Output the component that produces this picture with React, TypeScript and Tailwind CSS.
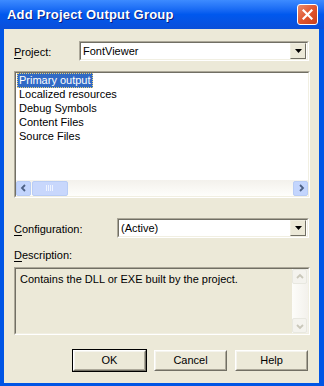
const font = { fontFamily: '"Liberation Sans", Arial, sans-serif' }

function Sunken({ className, children }: { className: string; children?: React.ReactNode }) {
  return (
    <div className={`border border-t-[#ACA899] border-l-[#ACA899] border-b-white border-r-white ${className}`}>
      <div className="flex h-full w-full flex-col border border-t-[#716F64] border-l-[#716F64] border-b-[#F1EFE2] border-r-[#F1EFE2]">
        {children}
      </div>
    </div>
  )
}

function Combo({ value, className }: { value: string; className: string }) {
  return (
    <Sunken className={`h-[20px] bg-white ${className}`}>
      <div className="flex h-full items-center">
        <span className="flex-1 pl-[2px] text-[11px] leading-none text-black">{value}</span>
        <div className="mr-[1px] flex h-[16px] w-[16px] items-center justify-center border border-t-[#F1EFE2] border-l-[#F1EFE2] border-b-[#716F64] border-r-[#716F64] bg-[#ECE9D8]">
          <svg width="7" height="4" viewBox="0 0 7 4">
            <path d="M0 0h7L3.5 4z" fill="#000" />
          </svg>
        </div>
      </div>
    </Sunken>
  )
}

function Underlined({ first, rest }: { first: string; rest: string }) {
  return (
    <span className="text-[11px] leading-none text-black">
      <span className="underline underline-offset-[2px]">{first}</span>
      {rest}
    </span>
  )
}

function ScrollBtn({ dir, disabled }: { dir: 'l' | 'r' | 'u' | 'd'; disabled?: boolean }) {
  const paths = {
    l: 'M5 1L2 4l3 3',
    r: 'M3 1l3 3-3 3',
    u: 'M1 5l3-3 3 3',
    d: 'M1 3l3 3 3-3',
  }
  return (
    <div
      className={`flex h-[15px] w-[15px] items-center justify-center rounded-[2px] border ${
        disabled ? 'border-[#E8E8E0] bg-[#F4F3EE]' : 'border-[#B8CCF5] bg-[#C3D5FD]'
      }`}
    >
      <svg width="8" height="8" viewBox="0 0 8 8">
        <path d={paths[dir]} fill="none" stroke={disabled ? '#C9C7BA' : '#4D6185'} strokeWidth="1.8" />
      </svg>
    </div>
  )
}

function Button({ label, isDefault }: { label: string; isDefault?: boolean }) {
  return (
    <div className={`h-[23px] w-[75px] border ${isDefault ? 'border-black' : 'border-transparent'}`}>
      <div className="h-full w-full border border-t-white border-l-white border-b-[#716F64] border-r-[#716F64] bg-[#ECE9D8]">
        <div className="flex h-full w-full items-center justify-center border border-t-[#F5F4EE] border-l-[#F5F4EE] border-b-[#ACA899] border-r-[#ACA899] text-[11px] text-black">
          {label}
        </div>
      </div>
    </div>
  )
}

export default function App() {
  const items = ['Primary output', 'Localized resources', 'Debug Symbols', 'Content Files', 'Source Files']
  return (
    <div className="flex h-[386px] w-[324px] flex-col bg-[#0055E5]" style={font}>
      {/* Title bar */}
      <div className="flex h-[29px] items-center justify-between bg-gradient-to-b from-[#3D8BFF] via-[#0058EE] to-[#0A4FD9] pl-[7px] pr-[6px]">
        <span className="text-[13px] font-bold tracking-[0.2px] text-white [text-shadow:1px_1px_0_#0A1E80]">
          Add Project Output Group
        </span>
        <div className="flex h-[21px] w-[21px] items-center justify-center rounded-[3px] border border-white bg-gradient-to-br from-[#E98A6B] via-[#E0552E] to-[#C8401C]">
          <svg width="11" height="11" viewBox="0 0 11 11">
            <path d="M1.5 1.5l8 8M9.5 1.5l-8 8" stroke="#fff" strokeWidth="2.2" strokeLinecap="square" />
          </svg>
        </div>
      </div>

      {/* Body */}
      <div className="ml-[4px] mr-[5px] flex h-[354px] flex-col bg-[#ECE9D8] pl-[10px] pr-[10px] pt-[12px]">
        <div className="flex h-[20px] items-center">
          <div className="w-[65px]">
            <Underlined first="P" rest="roject:" />
          </div>
          <Combo value="FontViewer" className="w-[230px]" />
        </div>

        <Sunken className="mt-[10px] h-[127px] w-[296px] bg-white">
          <div className="flex flex-1 flex-col pl-[1px]">
            {items.map((it, i) => (
              <div key={it} className="flex h-[14px] items-center">
                <span
                  className={`px-[1px] text-[11px] leading-[13px] ${
                    i === 0 ? 'border border-dotted border-[#E8D37A] bg-[#316AC5] text-white' : 'border border-transparent text-black'
                  }`}
                >
                  {it}
                </span>
              </div>
            ))}
          </div>
          <div className="flex h-[16px] items-center bg-gradient-to-b from-[#F3F1EC] to-[#FEFEFB] px-[0px]">
            <ScrollBtn dir="l" />
            <div className="ml-[1px] flex h-[15px] w-[36px] items-center justify-center rounded-[2px] border border-[#B8CCF5] bg-[#C8D7FC]">
              <svg width="8" height="6" viewBox="0 0 8 6">
                <path d="M0.5 0v6M2.5 0v6M4.5 0v6M6.5 0v6" stroke="#EEF3FF" strokeWidth="1" />
              </svg>
            </div>
            <div className="flex-1" />
            <ScrollBtn dir="r" />
          </div>
        </Sunken>

        <div className="mt-[20px] flex h-[20px] items-center">
          <div className="w-[103px]">
            <Underlined first="C" rest="onfiguration:" />
          </div>
          <Combo value="(Active)" className="w-[192px]" />
        </div>

        <div className="mt-[11px] flex h-[13px] items-center">
          <Underlined first="D" rest="escription:" />
        </div>

        <Sunken className="mt-[5px] h-[68px] w-[296px] bg-[#ECE9D8]">
          <div className="flex h-full">
            <div className="flex-1 pl-[4px] pt-[4px] text-[11px] leading-[13px] text-black">
              Contains the DLL or EXE built by the project.
            </div>
            <div className="flex w-[16px] flex-col bg-gradient-to-r from-[#FDFDFA] to-[#F3F1EC]">
              <ScrollBtn dir="u" disabled />
              <div className="flex-1" />
              <ScrollBtn dir="d" disabled />
            </div>
          </div>
        </Sunken>

        <div className="mt-[14px] flex justify-end gap-[6px] pr-[0px]">
          <Button label="OK" isDefault />
          <Button label="Cancel" />
          <Button label="Help" />
        </div>
      </div>
    </div>
  )
}
